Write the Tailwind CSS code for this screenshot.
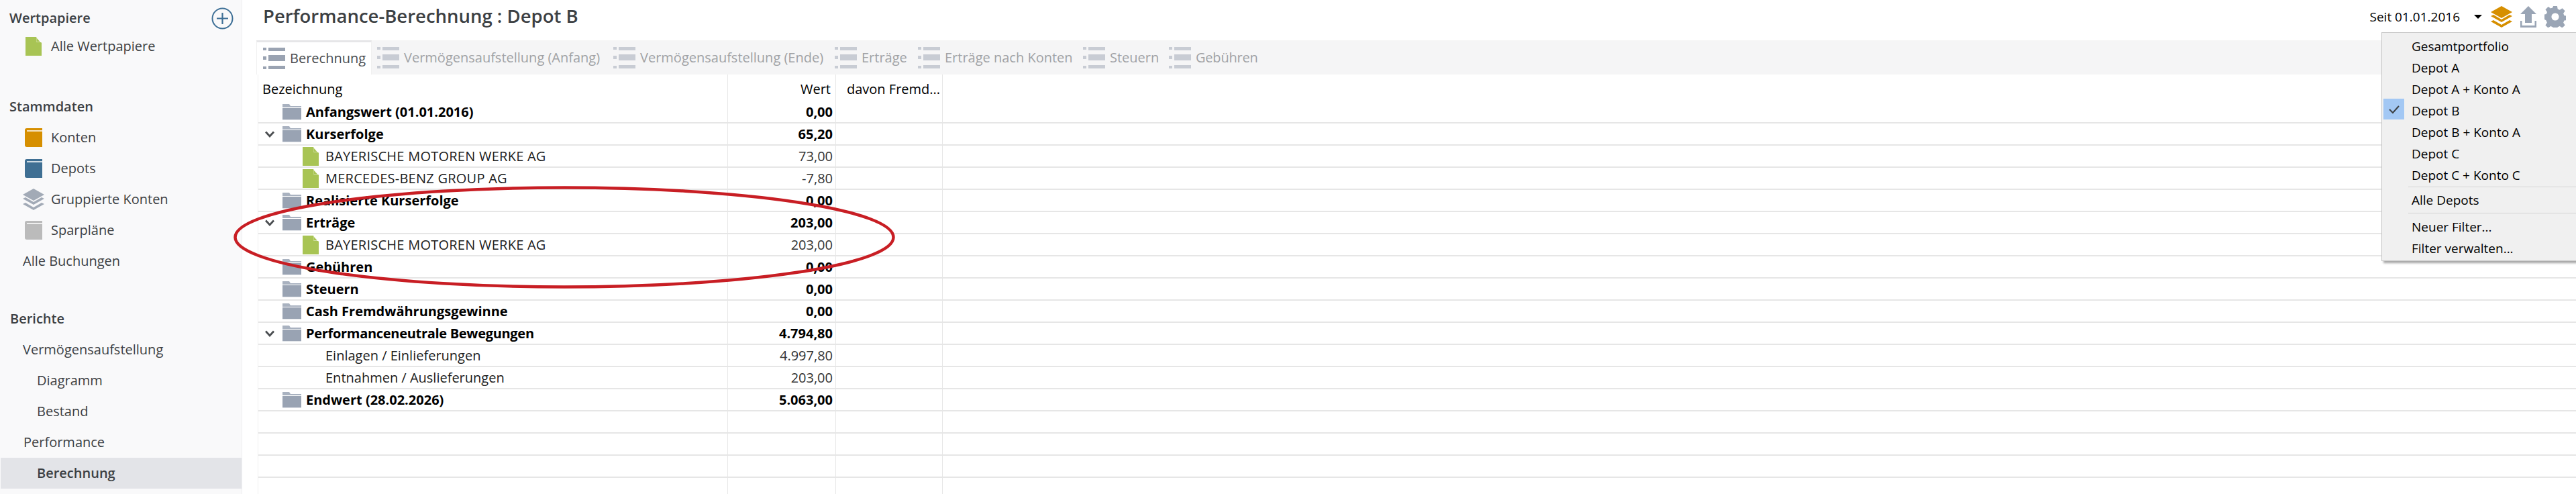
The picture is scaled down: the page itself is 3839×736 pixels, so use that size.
<!DOCTYPE html>
<html lang="de">
  <head>
    <meta charset="UTF-8" />
    <script src="https://cdn.jsdelivr.net/npm/@tailwindcss/browser@4"></script>
    <title>Performance-Berechnung : Depot B</title>
  </head>
  <body class="relative h-screen overflow-hidden bg-white font-['Open_Sans',sans-serif] text-[20px] text-black">
    <svg class="hidden">
      <symbol id="doc" viewBox="0 0 24 28"><path d="M0 0H16L24 9V28H0Z" fill="#a8c454" /><path d="M16.500 0L24 8H16.500Z" fill="#fff" /><path d="M16.500 1.500L22 7.500H16.500Z" fill="#a8c454" /></symbol>
      <symbol id="folder" viewBox="0 0 28 24"><path d="M0 0H10L12 3H28V5H0Z" fill="#a9b2c0" /><rect y="6" width="28" height="17" fill="#99a3b3" /><rect y="23" width="28" height="1" fill="#dfe2e7" /></symbol>
      <symbol id="list" viewBox="0 0 33 32"><g fill="currentColor"><rect x="0" y="0" width="5" height="4" /><rect x="8" y="0" width="25" height="5" /><rect x="0" y="13" width="5" height="5" /><rect x="8" y="11" width="25" height="9" /><rect x="0" y="28" width="5" height="4" /><rect x="8" y="27" width="25" height="5" /></g></symbol>
      <symbol id="book" viewBox="0 0 26 28"><path d="M3 0H26V28H3Q0 28 0 25V3Q0 0 3 0Z" fill="currentColor" /><rect x="3" y="3" width="23" height="2" fill="#fff" fill-opacity=".75" /></symbol>
      <symbol id="stack" viewBox="0 0 32 32"><path d="M16 0L32 9L16 18L0 9Z" fill="currentColor" /><path d="M0 15L4 13L16 20L28 13L32 15L16 24Z" fill="currentColor" /><path d="M0 23L4 21L16 28L28 21L32 23L16 32Z" fill="currentColor" /></symbol>
      <symbol id="chev" viewBox="0 0 14 10"><path d="M1 1.500L7 8L13 1.500" fill="none" stroke="#4a4d50" stroke-width="2.800" /></symbol>
    </svg>

    <div class="flex h-full">
      <!-- sidebar -->
      <aside class="w-[361px] shrink-0 border-r border-[#f0f0f1] bg-[#f9f9fa] pl-[1px] text-[#3c4043]">
        <div class="flex h-[46px] items-center justify-between pt-[8px] pr-[12px] pl-[13px]">
          <span class="font-semibold">Wertpapiere</span>
          <svg class="size-[33px]" viewBox="0 0 33 33"><circle cx="16.500" cy="16.500" r="15" fill="none" stroke="#3d6f96" stroke-width="2" /><path d="M16.500 8V25M8 16.500H25" stroke="#3d6f96" stroke-width="2.200" /></svg>
        </div>
        <div class="flex h-[46px] items-center pl-[37px]"><svg class="h-[28px] w-[24px]"><use href="#doc" /></svg><span class="ml-[14px]">Alle Wertpapiere</span></div>
        <div class="mt-[44px] flex h-[46px] items-center pl-[13px] font-semibold">Stammdaten</div>
        <div class="flex h-[46px] items-center pl-[36px] text-[#d68f00]"><svg class="h-[28px] w-[26px]"><use href="#book" /></svg><span class="ml-[13px] text-[#3c4043]">Konten</span></div>
        <div class="flex h-[46px] items-center pl-[36px] text-[#3f6f93]"><svg class="h-[28px] w-[26px]"><use href="#book" /></svg><span class="ml-[13px] text-[#3c4043]">Depots</span></div>
        <div class="flex h-[46px] items-center pl-[33px] text-[#a2aab6]"><svg class="size-[32px]"><use href="#stack" /></svg><span class="ml-[10px] text-[#3c4043]">Gruppierte Konten</span></div>
        <div class="flex h-[46px] items-center pl-[36px] text-[#bbbbbb]"><svg class="h-[28px] w-[26px]"><use href="#book" /></svg><span class="ml-[13px] text-[#3c4043]">Sparpläne</span></div>
        <div class="flex h-[46px] items-center pl-[33px]">Alle Buchungen</div>
        <div class="mt-[40px] flex h-[46px] items-center pl-[14px] font-semibold">Berichte</div>
        <div class="flex h-[46px] items-center pl-[33px]">Vermögensaufstellung</div>
        <div class="flex h-[46px] items-center pl-[54px]">Diagramm</div>
        <div class="flex h-[46px] items-center pl-[54px]">Bestand</div>
        <div class="flex h-[46px] items-center pl-[34px]">Performance</div>
        <div class="flex h-[46px] items-center bg-[#e3e4e8] pl-[54px] font-semibold">Berechnung</div>
      </aside>

      <!-- main -->
      <main class="min-w-0 flex-1">
        <header class="flex h-[60px] justify-between pr-[15px] pl-[31px]">
          <h1 class="pt-[3px] text-[27.500px] leading-[42px] font-semibold text-[#3c4043]">Performance-Berechnung : Depot B</h1>
          <div class="flex h-[50px] items-center text-[19px]">
            <span>Seit 01.01.2016</span>
            <span class="mr-[13px] ml-[21px] h-0 w-0 border-x-[6px] border-t-[6px] border-x-transparent border-t-black"></span>
            <svg class="size-[32px] text-[#d68f00]"><use href="#stack" /></svg>
            <svg class="ml-[12px] h-[32px] w-[24px]" viewBox="0 0 24 32"><path d="M12 0L24 12H17V25H7V12H0Z" fill="#9aa5b5" /><path d="M0 22H2.500V29H21.500V22H24V32H0Z" fill="#9aa5b5" /></svg>
            <svg class="ml-[12px] size-[32px]" viewBox="0 0 24 24"><path fill="#9aa5b5" fill-rule="evenodd" d="M9.800 0h4.400l.6 3.300 2.300 1 2.800-1.900 3.100 3.100-1.900 2.800 1 2.300 3.300.6v4.400l-3.300.6-1 2.300 1.900 2.800-3.100 3.100-2.800-1.900-2.300 1-.6 3.300H9.800l-.6-3.300-2.300-1-2.800 1.900-3.100-3.100 1.900-2.800-1-2.300L-1.300 14v-4.400l3.300-.6 1-2.300L1.100 3.900l3.100-3.100L7 2.700l2.300-1zM12 7.800a4.200 4.200 0 1 0 0 8.400 4.200 4.200 0 0 0 0-8.400z" /></svg>
          </div>
        </header>

        <!-- tabs -->
        <nav class="ml-[21px] flex h-[51px] bg-[#f5f5f6] text-[#a0a2a5]">
          <div class="flex w-[172px] items-center border-x border-t-[3px] border-x-[#f0f0f0] border-t-[#e6e6e8] bg-white pl-[9px] text-[#4a4d50]"><svg class="h-[32px] w-[33px] text-[#9aa3b2]"><use href="#list" /></svg><span class="ml-[7px]">Berechnung</span></div>
          <div class="flex w-[350px] items-center pl-[8px]"><svg class="h-[32px] w-[33px] text-[#c8ccd4]"><use href="#list" /></svg><span class="ml-[7px]">Vermögensaufstellung (Anfang)</span></div>
          <div class="flex w-[330px] items-center pl-[10px]"><svg class="h-[32px] w-[33px] text-[#c8ccd4]"><use href="#list" /></svg><span class="ml-[7px]">Vermögensaufstellung (Ende)</span></div>
          <div class="flex w-[124px] items-center pl-[10px]"><svg class="h-[32px] w-[33px] text-[#c8ccd4]"><use href="#list" /></svg><span class="ml-[7px]">Erträge</span></div>
          <div class="flex w-[246px] items-center pl-[10px]"><svg class="h-[32px] w-[33px] text-[#c8ccd4]"><use href="#list" /></svg><span class="ml-[7px]">Erträge nach Konten</span></div>
          <div class="flex w-[128px] items-center pl-[10px]"><svg class="h-[32px] w-[33px] text-[#c8ccd4]"><use href="#list" /></svg><span class="ml-[7px]">Steuern</span></div>
          <div class="flex items-center pl-[10px] tracking-[-0.2px]"><svg class="h-[32px] w-[33px] text-[#c8ccd4]"><use href="#list" /></svg><span class="ml-[7px]">Gebühren</span></div>
        </nav>

        <!-- table -->
        <div class="relative ml-[23px] border-l border-[#eeeeee]">
          <div class="absolute inset-y-0 left-[699px] w-px bg-[#e6e6e6]"></div>
          <div class="absolute inset-y-0 left-[860px] w-px bg-[#e6e6e6]"></div>
          <div class="absolute inset-y-0 left-[1019px] h-[625px] w-px bg-[#e6e6e6]"></div>
          <div class="grid h-[40px] grid-cols-[700px_161px_1fr] items-center pt-[4px]">
            <span class="pl-[6px]">Bezeichnung</span><span class="pr-[8px] text-right">Wert</span><span class="w-[159px] truncate pl-[16px]">davon Fremd...</span>
          </div>
          <div class="flex flex-col font-bold">
            <div class="flex h-[33px] items-center border-b-2 border-[#e6e6e6]"><svg class="ml-[36px] h-[24px] w-[28px]"><use href="#folder" /></svg><span class="ml-[7px] w-[628px]">Anfangswert (01.01.2016)</span><span class="w-[157px] text-right">0,00</span></div>
            <div class="flex h-[33px] items-center border-b-2 border-[#e6e6e6]"><svg class="ml-[10px] h-[10px] w-[14px]"><use href="#chev" /></svg><svg class="ml-[12px] h-[24px] w-[28px]"><use href="#folder" /></svg><span class="ml-[7px] w-[628px]">Kurserfolge</span><span class="w-[157px] text-right">65,20</span></div>
            <div class="flex h-[33px] items-center border-b-2 border-[#e6e6e6] font-normal"><svg class="ml-[66px] h-[28px] w-[24px]"><use href="#doc" /></svg><span class="ml-[10px] w-[599px] tracking-[0.25px] text-[#202020]">BAYERISCHE MOTOREN WERKE AG</span><span class="w-[157px] text-right text-[#333]">73,00</span></div>
            <div class="flex h-[33px] items-center border-b-2 border-[#e6e6e6] font-normal"><svg class="ml-[66px] h-[28px] w-[24px]"><use href="#doc" /></svg><span class="ml-[10px] w-[599px] tracking-[0.25px] text-[#202020]">MERCEDES-BENZ GROUP AG</span><span class="w-[157px] text-right text-[#333]">-7,80</span></div>
            <div class="flex h-[33px] items-center border-b-2 border-[#e6e6e6]"><svg class="ml-[36px] h-[24px] w-[28px]"><use href="#folder" /></svg><span class="ml-[7px] w-[628px]">Realisierte Kurserfolge</span><span class="w-[157px] text-right">0,00</span></div>
            <div class="flex h-[33px] items-center border-b-2 border-[#e6e6e6]"><svg class="ml-[10px] h-[10px] w-[14px]"><use href="#chev" /></svg><svg class="ml-[12px] h-[24px] w-[28px]"><use href="#folder" /></svg><span class="ml-[7px] w-[628px]">Erträge</span><span class="w-[157px] text-right">203,00</span></div>
            <div class="flex h-[33px] items-center border-b-2 border-[#e6e6e6] font-normal"><svg class="ml-[66px] h-[28px] w-[24px]"><use href="#doc" /></svg><span class="ml-[10px] w-[599px] tracking-[0.25px] text-[#202020]">BAYERISCHE MOTOREN WERKE AG</span><span class="w-[157px] text-right text-[#333]">203,00</span></div>
            <div class="flex h-[33px] items-center border-b-2 border-[#e6e6e6]"><svg class="ml-[36px] h-[24px] w-[28px]"><use href="#folder" /></svg><span class="ml-[7px] w-[628px]">Gebühren</span><span class="w-[157px] text-right">0,00</span></div>
            <div class="flex h-[33px] items-center border-b-2 border-[#e6e6e6]"><svg class="ml-[36px] h-[24px] w-[28px]"><use href="#folder" /></svg><span class="ml-[7px] w-[628px]">Steuern</span><span class="w-[157px] text-right">0,00</span></div>
            <div class="flex h-[33px] items-center border-b-2 border-[#e6e6e6]"><svg class="ml-[36px] h-[24px] w-[28px]"><use href="#folder" /></svg><span class="ml-[7px] w-[628px]">Cash Fremdwährungsgewinne</span><span class="w-[157px] text-right">0,00</span></div>
            <div class="flex h-[33px] items-center border-b-2 border-[#e6e6e6]"><svg class="ml-[10px] h-[10px] w-[14px]"><use href="#chev" /></svg><svg class="ml-[12px] h-[24px] w-[28px]"><use href="#folder" /></svg><span class="ml-[7px] w-[628px] tracking-[-0.3px]">Performanceneutrale Bewegungen</span><span class="w-[157px] text-right">4.794,80</span></div>
            <div class="flex h-[33px] items-center border-b-2 border-[#e6e6e6] font-normal"><span class="ml-[100px] w-[599px] text-[#202020]">Einlagen / Einlieferungen</span><span class="w-[157px] text-right text-[#333]">4.997,80</span></div>
            <div class="flex h-[33px] items-center border-b-2 border-[#e6e6e6] font-normal"><span class="ml-[100px] w-[599px] text-[#202020]">Entnahmen / Auslieferungen</span><span class="w-[157px] text-right text-[#333]">203,00</span></div>
            <div class="flex h-[33px] items-center border-b-2 border-[#e6e6e6]"><svg class="ml-[36px] h-[24px] w-[28px]"><use href="#folder" /></svg><span class="ml-[7px] w-[628px]">Endwert (28.02.2026)</span><span class="w-[157px] text-right">5.063,00</span></div>
            <div class="h-[33px] border-b-2 border-[#e6e6e6]"></div>
            <div class="h-[33px] border-b-2 border-[#e6e6e6]"></div>
            <div class="h-[33px] border-b-2 border-[#e6e6e6]"></div>
            <div class="h-[33px] border-b-2 border-[#e6e6e6]"></div>
          </div>
        </div>
      </main>
    </div>

    <!-- red marker drawn over the table -->
    <svg class="pointer-events-none absolute top-[270px] left-[340px] h-[170px] w-[1010px]" viewBox="0 0 1010 170">
      <ellipse cx="501" cy="83.500" rx="490.500" ry="74" fill="none" stroke="#c81e24" stroke-width="4.500" />
    </svg>

    <!-- dropdown -->
    <div class="absolute top-[48px] left-[3549px] h-[341px] w-[291px] border border-[#c8c8c8] bg-[#f0f0f0] pt-[4px] text-[19px] shadow-[3px_3px_3px_rgba(0,0,0,0.35)]">
      <div class="absolute top-[98px] left-[2px] flex h-[31px] w-[31px] items-center justify-center bg-[#a3c8f4]"><svg class="h-[14px] w-[16px]" viewBox="0 0 16 14"><path d="M1 7L6 12L15 2" fill="none" stroke="#3c4043" stroke-width="2" /></svg></div>
      <div class="ml-[39px] flex flex-col">
        <div class="flex h-[32px] items-center pl-[5px]">Gesamtportfolio</div>
        <div class="flex h-[32px] items-center pl-[5px]">Depot A</div>
        <div class="flex h-[32px] items-center pl-[5px]">Depot A + Konto A</div>
        <div class="flex h-[32px] items-center pl-[5px]">Depot B</div>
        <div class="flex h-[32px] items-center pl-[5px]">Depot B + Konto A</div>
        <div class="flex h-[32px] items-center pl-[5px]">Depot C</div>
        <div class="flex h-[32px] items-center pl-[5px]">Depot C + Konto C</div>
        <div class="mt-[1px] mb-[3px] h-px bg-[#d4d4d4]"></div>
        <div class="flex h-[33px] items-center pl-[5px]">Alle Depots</div>
        <div class="mt-[2px] mb-[4px] h-px bg-[#d4d4d4]"></div>
        <div class="flex h-[32px] items-center pl-[5px]">Neuer Filter...</div>
        <div class="flex h-[32px] items-center pl-[5px]">Filter verwalten...</div>
      </div>
    </div>
  </body>
</html>
